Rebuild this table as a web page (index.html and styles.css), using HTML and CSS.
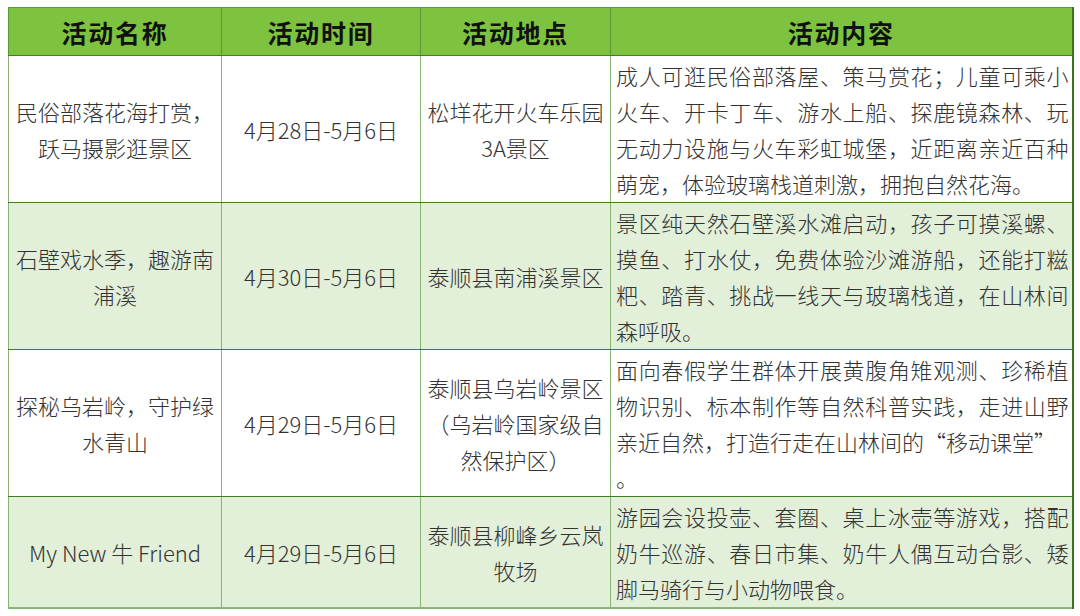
FILE: index.html
```html
<!DOCTYPE html>
<html lang="zh-CN">
<head>
<meta charset="utf-8">
<link rel="stylesheet" href="styles.css">
</head>
<body>
<table class="schedule">
  <colgroup>
    <col class="c1"><col class="c2"><col class="c3"><col class="c4">
  </colgroup>
  <thead>
    <tr class="head">
      <th>活动名称</th><th>活动时间</th><th>活动地点</th><th>活动内容</th>
    </tr>
  </thead>
  <tbody>
    <tr class="r4">
      <td>民俗部落花海打赏，<br>跃马摄影逛景区</td>
      <td>4月28日-5月6日</td>
      <td>松垟花开火车乐园<br>3A景区</td>
      <td class="desc">成人可逛民俗部落屋、策马赏花；儿童可乘小火车、开卡丁车、游水上船、探鹿镜森林、玩无动力设施与火车彩虹城堡，近距离亲近百种萌宠，体验玻璃栈道刺激，拥抱自然花海。</td>
    </tr>
    <tr class="r4 alt">
      <td>石壁戏水季，趣游南<br>浦溪</td>
      <td>4月30日-5月6日</td>
      <td>泰顺县南浦溪景区</td>
      <td class="desc">景区纯天然石壁溪水滩启动，孩子可摸溪螺、摸鱼、打水仗，免费体验沙滩游船，还能打糍粑、踏青、挑战一线天与玻璃栈道，在山林间森呼吸。</td>
    </tr>
    <tr class="r4">
      <td>探秘乌岩岭，守护绿<br>水青山</td>
      <td>4月29日-5月6日</td>
      <td>泰顺县乌岩岭景区<br>（乌岩岭国家级自<br>然保护区）</td>
      <td class="desc">面向春假学生群体开展黄腹角雉观测、珍稀植物识别、标本制作等自然科普实践，走进山野亲近自然，打造行走在山林间的“移动课堂”<br>。</td>
    </tr>
    <tr class="r3 alt">
      <td>My New 牛 Friend</td>
      <td>4月29日-5月6日</td>
      <td>泰顺县柳峰乡云岚<br>牧场</td>
      <td class="desc">游园会设投壶、套圈、桌上冰壶等游戏，搭配奶牛巡游、春日市集、奶牛人偶互动合影、矮脚马骑行与小动物喂食。</td>
    </tr>
  </tbody>
</table>
</body>
</html>
```

FILE: styles.css
```css
html, body {
  margin: 0;
  padding: 0;
  background: #ffffff;
}

body {
  padding: 7px 8px 0 8px;
  font-family: "Noto Sans CJK SC", "Noto Sans", sans-serif;
  color: #333333;
}

.schedule {
  width: 1064px;
  border-collapse: collapse;
  table-layout: fixed;
  border-top: 1px solid #5f9a3e;
  border-left: 1px solid #4f8a30;
  border-right: 2px solid #3a7420;
  border-bottom: 2px solid #8db47a;
}

.c1 { width: 213px; }
.c2 { width: 199px; }
.c3 { width: 190px; }
.c4 { width: 462px; }

.head {
  height: 48px;
  background: #7dc340;
}

.head th {
  font-size: 25px;
  font-weight: 700;
  letter-spacing: 1.8px;
  color: #111111;
  text-align: center;
  vertical-align: middle;
  padding: 0;
  line-height: 30px;
  border-left: 1px solid #5a9a35;
  border-right: 1px solid #5a9a35;
  border-bottom: 1px solid #3f7f22;
}

.r4 { height: 147px; }
.r3 { height: 111px; }

.alt { background: #e2efd9; }

td {
  font-size: 22px;
  font-weight: 300;
  line-height: 36px;
  text-align: center;
  vertical-align: middle;
  padding: 0 4px;
  border-left: 1px solid #88b272;
  border-right: 1px solid #88b272;
  border-top: 1px solid #3d7f1f;
  border-bottom: 1px solid #3d7f1f;
  color: #333333;
  overflow: hidden;
}

td.desc {
  text-align: justify;
  padding: 0 3px 0 5px;
  border-right: 2px solid #3a7420;
}
```
